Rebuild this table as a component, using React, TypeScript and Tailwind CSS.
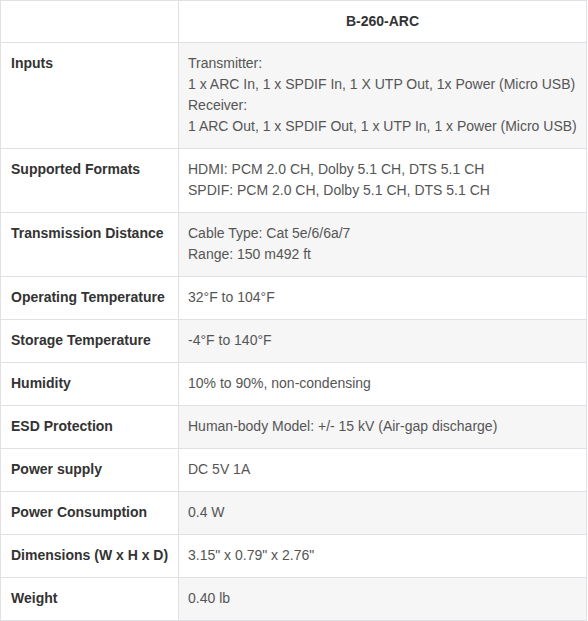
import React from 'react';

const rows: { label: string; lines: string[] }[] = [
  {
    label: 'Inputs',
    lines: [
      'Transmitter:',
      '1 x ARC In, 1 x SPDIF In, 1 X UTP Out, 1x Power (Micro USB)',
      'Receiver:',
      '1 ARC Out, 1 x SPDIF Out, 1 x UTP In, 1 x Power (Micro USB)',
    ],
  },
  {
    label: 'Supported Formats',
    lines: ['HDMI: PCM 2.0 CH, Dolby 5.1 CH, DTS 5.1 CH', 'SPDIF: PCM 2.0 CH, Dolby 5.1 CH, DTS 5.1 CH'],
  },
  { label: 'Transmission Distance', lines: ['Cable Type: Cat 5e/6/6a/7', 'Range: 150 m492 ft'] },
  { label: 'Operating Temperature', lines: ['32°F to 104°F'] },
  { label: 'Storage Temperature', lines: ['-4°F to 140°F'] },
  { label: 'Humidity', lines: ['10% to 90%, non-condensing'] },
  { label: 'ESD Protection', lines: ['Human-body Model: +/- 15 kV (Air-gap discharge)'] },
  { label: 'Power supply', lines: ['DC 5V 1A'] },
  { label: 'Power Consumption', lines: ['0.4 W'] },
  { label: 'Dimensions (W x H x D)', lines: ['3.15" x 0.79" x 2.76"'] },
  { label: 'Weight', lines: ['0.40 lb'] },
];

export default function App() {
  return (
    <div className="bg-white w-[588px] h-[621px] font-['Liberation_Sans',Arial,sans-serif] text-[14px] leading-[21px]">
      <table className="w-[587px] border-collapse table-fixed">
        <colgroup>
          <col className="w-[178px]" />
          <col />
        </colgroup>
        <thead>
          <tr>
            <th className="border border-[#e1e0e4] py-[10px] px-[10px]"></th>
            <th className="border border-[#e1e0e4] py-[10px] px-[10px] text-center font-bold text-[#333]">
              B-260-ARC
            </th>
          </tr>
        </thead>
        <tbody>
          {rows.map((row, i) => (
            <tr key={row.label}>
              <td className="border border-[#e1e0e4] pt-[10px] pb-[11px] pl-[10px] pr-[6px] align-top font-bold text-[#333] whitespace-nowrap">
                {row.label}
              </td>
              <td
                className={
                  'border border-[#e1e0e4] pt-[10px] pb-[11px] pl-[9px] pr-[6px] align-top text-[#555] whitespace-nowrap ' +
                  (i % 2 === 0 ? 'bg-[#f6f6f6]' : 'bg-white')
                }
              >
                {row.lines.map((l) => (
                  <div key={l}>{l}</div>
                ))}
              </td>
            </tr>
          ))}
        </tbody>
      </table>
    </div>
  );
}
